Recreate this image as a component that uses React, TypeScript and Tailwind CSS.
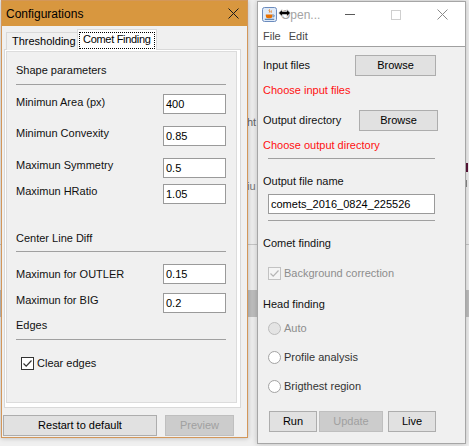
import React from "react";

const FONT = "font-['Liberation_Sans',Arial,sans-serif]";

interface FieldRowProps {
  label: string;
  value: string;
  top: string;
  lift: string;
}

const FieldRow: React.FC<FieldRowProps> = ({ label, value, top, lift }) => (
  <div className={`${top} h-[20px] flex items-center`}>
    <span className={`w-[147px] text-[11px] leading-[13px] text-[#111] ${lift}`}>
      {label}
    </span>
    <div className="w-[63px] h-[20px] border border-[#9a9a9a] bg-white pl-[2px] flex items-center text-[11px] text-black">
      {value}
    </div>
  </div>
);

const Separator: React.FC<{ className: string }> = ({ className }) => (
  <div className={`h-px bg-[#a0a0a0] ${className}`} />
);

const CheckMark: React.FC<{ color: string }> = ({ color }) => (
  <svg width="11" height="11" viewBox="0 0 11 11">
    <path d="M1.5 5.5 L4.2 8.2 L9.5 2.5" fill="none" stroke={color} strokeWidth="1.2" />
  </svg>
);

const CloseGlyph: React.FC<{ color: string }> = ({ color }) => (
  <svg width="11" height="11" viewBox="0 0 11 11">
    <path d="M0.5 0.5 L10.5 10.5 M10.5 0.5 L0.5 10.5" stroke={color} strokeWidth="1" />
  </svg>
);

const JavaIcon = () => (
  <svg width="15" height="15" viewBox="0 0 15 15">
    <rect x="0.5" y="0.5" width="14" height="14" rx="2" fill="#dfeaf8" stroke="#6b8bbd" />
    <path d="M7.5 2.5 c-1.2 1 1 1.8 -0.2 3 M9.3 3.5 c-0.8 0.8 0.6 1.3 -0.2 2.2" fill="none" stroke="#e76f00" strokeWidth="1" />
    <path d="M3.8 7.5 h6.6 v1.4 a2.3 2.3 0 0 1 -2.3 2.3 h-2 a2.3 2.3 0 0 1 -2.3 -2.3z" fill="#e76f00" />
    <path d="M10.4 8 h1 a0.9 0.9 0 0 1 0 1.8 h-1" fill="none" stroke="#4f78a6" strokeWidth="0.9" />
    <path d="M2.8 12.3 h9.4" stroke="#4f78a6" strokeWidth="1.1" />
  </svg>
);

const Radio: React.FC<{ label: string; disabled?: boolean; top: string }> = ({ label, disabled, top }) => (
  <div className={`${top} h-[13px] ml-[10px] flex items-center gap-[3px]`}>
    <div
      className={
        disabled
          ? "w-[13px] h-[13px] rounded-full border border-[#bcbcbc] bg-[#e4e4e4]"
          : "w-[13px] h-[13px] rounded-full border border-[#a3a3a3] bg-white"
      }
    />
    <span className={disabled ? "text-[11px] leading-[13px] text-[#8d8d8d]" : "text-[11px] leading-[13px] text-[#333]"}>
      {label}
    </span>
  </div>
);

const Button: React.FC<{ label: string; className: string; disabled?: boolean }> = ({ label, className, disabled }) => (
  <div
    className={`${className} h-[21px] flex items-center justify-center text-[11px] ${
      disabled ? "bg-[#cccccc] border border-[#bfbfbf] text-[#a0a0a0]" : "bg-[#e1e1e1] border border-[#adadad] text-black"
    }`}
  >
    {label}
  </div>
);

const ConfigWindow = () => (
  <div className="absolute left-[1px] top-0 w-[247px] h-[438px] border border-[#d3975a] bg-[#f0f0f0] flex flex-col shadow-[0_0_5px_rgba(0,0,0,0.25)]">
    {/* title bar */}
    <div className="h-[25px] bg-[#d8973f] flex items-center justify-between pl-[4px] pr-[8px]">
      <span className="text-[12px] text-black">Configurations</span>
      <CloseGlyph color="#1a1a1a" />
    </div>

    {/* tabs */}
    <div className="mt-[3px] h-[21px] flex items-end ml-[4px] relative z-10">
      <div className="w-[72px] h-[18px] border border-b-0 border-[#d9d9d9] bg-[#f0f0f0] pl-[5px] flex items-center text-[11px] text-black whitespace-nowrap">
        Thresholding
      </div>
      <div className="w-[80px] h-[21px] border border-b-0 border-[#d9d9d9] bg-white pl-[1px] pr-px pt-[2px] pb-[1px] -ml-px">
        <div className="h-full border border-dotted border-black pl-[3px] pb-[2px] flex items-center text-[11px] tracking-[-0.3px] text-black whitespace-nowrap overflow-hidden">
          Comet Finding
        </div>
      </div>
    </div>

    {/* tab panel */}
    <div className="-mt-px ml-[2px] w-[237px] h-[359px] border border-[#d9d9d9] bg-white pl-px pt-px pr-[3px] pb-[4px]">
      <div className="h-full border border-[#dcdcdc] bg-[#f0f0f0] px-[9px] flex flex-col">
        <span className="mt-[12px] h-[13px] text-[11px] leading-[13px] text-[#111]">Shape parameters</span>
        <Separator className="mt-[7px] w-[210px]" />
        <FieldRow top="mt-[9px]" label="Minimun Area (px)" value="400" lift="mb-[4px]" />
        <FieldRow top="mt-[12px]" label="Minimun Convexity" value="0.85" lift="mb-[5px]" />
        <FieldRow top="mt-[12px]" label="Maximun Symmetry" value="0.5" lift="mb-[6px]" />
        <FieldRow top="mt-[6px]" label="Maximun HRatio" value="1.05" lift="mb-[6px]" />
        <span className="mt-[28px] h-[13px] text-[11px] leading-[13px] text-[#111]">Center Line Diff</span>
        <Separator className="mt-[6px] w-[210px]" />
        <FieldRow top="mt-[12px]" label="Maximun for OUTLER" value="0.15" lift="mb-0" />
        <FieldRow top="mt-[9px]" label="Maximun for BIG" value="0.2" lift="mb-[5px]" />
        <span className="mt-[6px] h-[13px] text-[11px] leading-[13px] text-[#111]">Edges</span>
        <Separator className="mt-[7px] w-[210px]" />
        <div className="mt-[17px] ml-[5px] h-[13px] flex items-center gap-[3px]">
          <div className="w-[13px] h-[13px] border border-[#333] bg-white flex items-center justify-center">
            <CheckMark color="#333" />
          </div>
          <span className="text-[11px] leading-[13px] text-[#111]">Clear edges</span>
        </div>
      </div>
    </div>

    {/* buttons */}
    <div className="mt-[7px] flex">
      <Button label="Restart to default" className="ml-px w-[154px]" />
      <Button label="Preview" className="ml-[8px] w-[69px]" disabled />
    </div>
  </div>
);

const OpenWindow = () => (
  <div className="absolute left-[257px] top-[1px] w-[209px] h-[443px] border border-[#a6a6a6] bg-[#f0f0f0] flex flex-col shadow-[0_0_6px_rgba(0,0,0,0.22)]">
    {/* title bar */}
    <div className="h-[25px] bg-white flex items-center">
      <div className="ml-[4px] flex items-center">
        <JavaIcon />
      </div>
      <div className="relative ml-[4px] h-full flex items-center">
        <span className="text-[12px] text-[#a3a3a3]">Open...</span>
        {/* mouse cursor lying over the title */}
        <svg className="absolute left-[-3px] top-[6px]" width="13" height="10" viewBox="0 0 13 10">
          <path d="M0.5 5 L4.2 1.3 V3.3 H8.8 V1.3 L12.5 5 L8.8 8.7 V6.7 H4.2 V8.7 Z" fill="#000" stroke="#fff" strokeWidth="0.8" />
        </svg>
      </div>
      <div className="ml-auto flex h-full">
        <div className="w-[46px] h-full flex items-center justify-center">
          <div className="w-[10px] h-px bg-[#5a5a5a]" />
        </div>
        <div className="w-[46px] h-full flex items-center justify-center">
          <div className="w-[10px] h-[10px] border border-[#cfcfcf]" />
        </div>
        <div className="w-[46px] h-full flex items-center justify-center">
          <CloseGlyph color="#8a8a8a" />
        </div>
      </div>
    </div>

    {/* menu bar */}
    <div className="h-[20px] bg-white border-b border-[#a0a0a0] pl-[5px] flex items-center gap-[8px] text-[11px] text-[#474747]">
      <span>File</span>
      <span>Edit</span>
    </div>

    {/* content */}
    <div className="flex flex-col text-[11px] leading-[13px]">
      <div className="mt-[8px] h-[21px] flex items-center">
        <span className="w-[97px] pl-[5px] text-[#111]">Input files</span>
        <Button label="Browse" className="w-[81px]" />
      </div>
      <span className="mt-[8px] h-[13px] pl-[5px] text-[#ff1010]">Choose input files</span>
      <div className="mt-[13px] h-[21px] flex items-center">
        <span className="w-[101px] pl-[5px] text-[#111]">Output directory</span>
        <Button label="Browse" className="w-[79px]" />
      </div>
      <span className="mt-[8px] h-[13px] pl-[5px] text-[#ff1010]">Choose output directory</span>
      <Separator className="mt-[6px] ml-[10px] w-[167px]" />
      <span className="mt-[16px] h-[13px] pl-[5px] text-[#111]">Output file name</span>
      <div className="mt-[6px] ml-[10px] w-[167px] h-[20px] border border-[#9a9a9a] bg-white pl-[2px] flex items-center text-black">
        comets_2016_0824_225526
      </div>
      <Separator className="mt-[6px] ml-[10px] w-[167px]" />
      <span className="mt-[16px] h-[13px] pl-[5px] text-[#111]">Comet finding</span>
      <div className="mt-[17px] ml-[10px] h-[13px] flex items-center gap-[3px]">
        <div className="w-[13px] h-[13px] border border-[#c2c2c2] bg-[#f4f4f4] flex items-center justify-center">
          <CheckMark color="#b5b5b5" />
        </div>
        <span className="text-[#8d8d8d]">Background correction</span>
      </div>
      <span className="mt-[18px] h-[13px] pl-[5px] text-[#111]">Head finding</span>
      <Radio top="mt-[11px]" label="Auto" disabled />
      <Radio top="mt-[16px]" label="Profile analysis" />
      <Radio top="mt-[16px]" label="Brigthest region" />
      <div className="mt-[18px] flex">
        <Button label="Run" className="ml-[11px] w-[48px]" />
        <Button label="Update" className="ml-[2px] w-[64px]" disabled />
        <Button label="Live" className="ml-[5px] w-[48px]" />
      </div>
    </div>
  </div>
);

export default function App() {
  return (
    <div className={`${FONT} relative w-[469px] h-[446px] overflow-hidden bg-[#f0f0f0]`}>
      {/* fragments of the window lying underneath */}
      <div className="absolute left-0 top-[244px] w-[469px] h-px bg-[#c8c8c8]" />
      <div className="absolute left-0 top-[290px] w-[469px] h-[27px] bg-[#bfbfbf]" />
      <span className="absolute left-[247px] top-[114px] text-[11px] text-[#666]">ht</span>
      <span className="absolute left-[247px] top-[178px] text-[11px] text-[#777]">iu</span>
      <div className="absolute left-[466px] top-[163px] w-[2px] h-[9px] bg-[#5a1438]" />
      <div className="absolute left-[466px] top-[180px] w-[1px] h-[7px] bg-[#8a8a8a]" />

      <ConfigWindow />
      <OpenWindow />
    </div>
  );
}
